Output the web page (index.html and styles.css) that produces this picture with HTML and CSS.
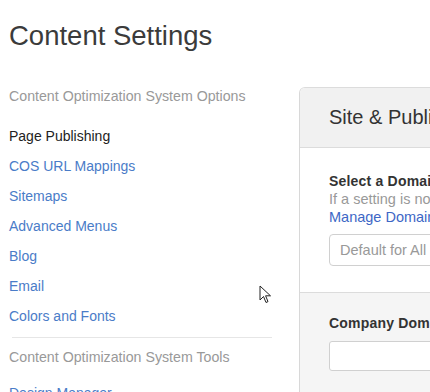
FILE: index.html
```html
<!DOCTYPE html>
<html>
<head>
<meta charset="utf-8">
<link rel="stylesheet" href="styles.css">
</head>
<body>
<div class="page">
  <h1 class="title">Content Settings</h1>
  <div class="layout">
    <nav class="sidebar">
      <div class="nav-heading">Content Optimization System Options</div>
      <ul class="nav-list">
        <li class="nav-item active">Page Publishing</li>
        <li class="nav-item"><a href="#">COS URL Mappings</a></li>
        <li class="nav-item"><a href="#">Sitemaps</a></li>
        <li class="nav-item"><a href="#">Advanced Menus</a></li>
        <li class="nav-item"><a href="#">Blog</a></li>
        <li class="nav-item"><a href="#">Email</a></li>
        <li class="nav-item"><a href="#">Colors and Fonts</a></li>
      </ul>
      <hr class="nav-sep">
      <div class="nav-heading tools">Content Optimization System Tools</div>
      <ul class="nav-list">
        <li class="nav-item"><a href="#">Design Manager</a></li>
      </ul>
    </nav>
    <section class="panel">
      <div class="panel-header">Site &amp; Publishing</div>
      <div class="panel-body">
        <div class="label">Select a Domain</div>
        <div class="help">If a setting is not available for a domain</div>
        <a class="help-link" href="#">Manage Domains</a>
        <div class="select">Default for All Domains</div>
      </div>
      <div class="panel-section">
        <div class="label">Company Domain</div>
        <div class="input"></div>
      </div>
    </section>
  </div>
  <svg class="cursor" width="13" height="20" viewBox="0 0 13 20">
    <path d="M1 1 L1 15 L4.5 11.5 L7 17.5 L9 16.6 L6.6 10.8 L11.5 10.8 Z" fill="#fff" stroke="#222" stroke-width="1" stroke-linejoin="round"/>
  </svg>
</div>
</body>
</html>
```

FILE: styles.css
```css
html, body {
  margin: 0;
  padding: 0;
  background: #fff;
  overflow: hidden;
}
body {
  font-family: "Liberation Sans", Arial, sans-serif;
  color: #333;
}
.page {
  position: relative;
  padding: 20px 0 0 9px;
  width: 421px;
  height: 372px;
  overflow: hidden;
}
.title {
  margin: 0;
  font-size: 27.5px;
  line-height: 31px;
  font-weight: normal;
  color: #3b3b3b;
}
.layout {
  display: flex;
  gap: 27px;
  margin-top: 35px;
}
.sidebar {
  flex: 0 0 263px;
}
.nav-heading {
  font-size: 14.2px;
  line-height: 20px;
  color: #999;
}
.nav-list {
  list-style: none;
  margin: 15px 0 0 0;
  padding: 0;
}
.nav-item {
  font-size: 14px;
  line-height: 30px;
  color: #222;
}
.nav-item a {
  color: #4a7cc8;
  text-decoration: none;
}
.nav-sep {
  border: 0;
  border-top: 1px solid #e6e6e6;
  margin: 6px 0 0 3px;
  height: 0;
}
.nav-heading.tools {
  margin-top: 9px;
}
.nav-heading.tools + .nav-list {
  margin-top: 11px;
}
.panel {
  flex: 0 0 400px;
  margin-top: 1px;
  border-left: 1px solid #d8d8d8;
  border-top: 1px solid #dcdcdc;
  border-top-left-radius: 6px;
  overflow: hidden;
}
.panel-header {
  height: 59px;
  line-height: 59px;
  padding-left: 29px;
  font-size: 20px;
  color: #333;
  background: #f1f1f1;
  border-bottom: 1px solid #dcdcdc;
}
.panel-body {
  background: #fff;
  padding: 24px 0 26px 29px;
  display: flex;
  flex-direction: column;
  align-items: flex-start;
}
.label {
  font-size: 14px;
  line-height: 18px;
  font-weight: bold;
  letter-spacing: 0.2px;
  color: #333;
  white-space: nowrap;
}
.help {
  font-size: 14.5px;
  line-height: 18px;
  color: #999;
  white-space: nowrap;
}
.help-link {
  font-size: 14.5px;
  line-height: 18px;
  color: #3d67c6;
  text-decoration: none;
  white-space: nowrap;
}
.select {
  margin-top: 8px;
  box-sizing: border-box;
  width: 200px;
  height: 32px;
  line-height: 30px;
  padding-left: 10px;
  font-size: 14.5px;
  color: #999;
  border: 1px solid #d0d0d0;
  border-radius: 4px;
  background: #fff;
  white-space: nowrap;
}
.panel-section {
  background: #f5f5f5;
  border-top: 1px solid #dcdcdc;
  padding: 21px 0 30px 29px;
}
.input {
  margin-top: 9px;
  box-sizing: border-box;
  width: 200px;
  height: 30px;
  background: #fff;
  border: 1px solid #d0d0d0;
  border-radius: 3px;
}
.cursor {
  position: absolute;
  left: 259px;
  top: 285px;
}
```
